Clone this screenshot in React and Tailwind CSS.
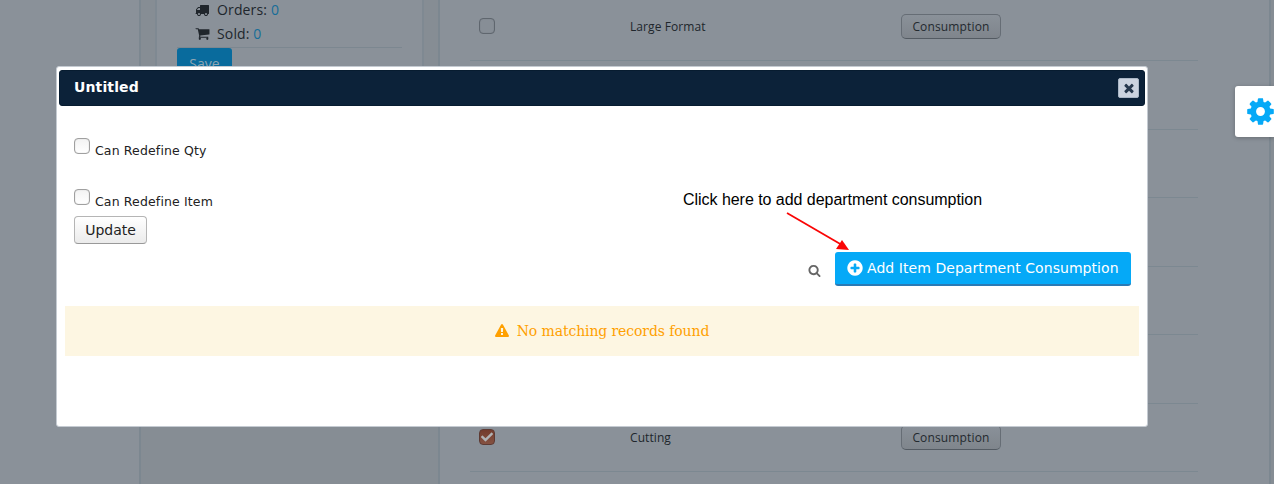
import React from "react";
import { FaCheck } from "react-icons/fa";

const ICONS = {
  cog: "M1152 896q0-106-75-181t-181-75-181 75-75 181 75 181 181 75 181-75 75-181zm512-109v222q0 12-8 23t-20 13l-185 28q-19 54-39 91 35 50 107 138 10 12 10 25t-9 23q-27 37-99 108t-94 71q-12 0-26-9l-138-108q-44 23-91 38-16 136-29 186-7 28-36 28h-222q-14 0-24.5-8.5t-11.5-21.5l-28-184q-49-16-90-37l-141 107q-10 9-25 9-14 0-25-11-126-114-165-168-7-10-7-23 0-12 8-23 15-21 51-66.5t54-70.5q-27-50-41-99l-183-27q-13-2-21-12.5t-8-23.5v-222q0-12 8-23t19-13l186-28q14-46 39-92-40-57-107-138-10-12-10-24 0-10 9-23 26-36 98.5-107.5t94.5-71.5q13 0 26 10l138 107q44-23 91-38 16-136 29-186 7-28 36-28h222q14 0 24.5 8.5t11.5 21.5l28 184q49 16 90 37l142-107q9-9 24-9 13 0 25 10 129 119 165 170 7 8 7 22 0 12-8 23-15 21-51 66.5t-54 70.5q26 50 41 98l183 28q13 2 21 12.5t8 23.5z",
  times: "M1490 1322q0 40-28 68l-136 136q-28 28-68 28t-68-28l-294-294-294 294q-28 28-68 28t-68-28l-136-136q-28-28-28-68t28-68l294-294-294-294q-28-28-28-68t28-68l136-136q28-28 68-28t68 28l294 294 294-294q28-28 68-28t68 28l136 136q28 28 28 68t-28 68l-294 294 294 294q28 28 28 68z",
  truck: "M640 1408q0-52-38-90t-90-38-90 38-38 90 38 90 90 38 90-38 38-90zm-384-512h384v-256h-158q-13 0-22 9l-195 195q-9 9-9 22v30zm1280 512q0-52-38-90t-90-38-90 38-38 90 38 90 90 38 90-38 38-90zm256-1088v1024q0 15-4 26.5t-13.5 18.5-16.5 11.5-23.5 6-22.5 2-25.5 0-22.5-.5q0 106-75 181t-181 75-181-75-75-181h-384q0 106-75 181t-181 75-181-75-75-181h-64q-3 0-22.5.5t-25.5 0-22.5-2-23.5-6-16.5-11.5-13.5-18.5-4-26.5q0-26 19-45t45-19v-320q0-8-.5-35t0-38 2.5-34.5 6.5-37 14-30.5 22.5-30l198-198q19-19 50.5-32t58.5-13h160v-192q0-26 19-45t45-19h1024q26 0 45 19t19 45z",
  cart: "M704 1536q0 52-38 90t-90 38-90-38-38-90 38-90 90-38 90 38 38 90zm896 0q0 52-38 90t-90 38-90-38-38-90 38-90 90-38 90 38 38 90zm128-1088v512q0 24-16.5 42.5t-40.5 21.5l-1044 122q13 60 13 70 0 16-24 64h920q26 0 45 19t19 45-19 45-45 19h-1024q-26 0-45-19t-19-45q0-11 8-31.5t16-36 21.5-40 15.5-29.5l-177-823h-204q-26 0-45-19t-19-45 19-45 45-19h256q16 0 28.5 6.5t19.5 15.5 13 24.5 8 26 5.5 29.5 4.5 26h1201q26 0 45 19t19 45z",
  search: "M1216 832q0-185-131.5-316.5t-316.5-131.5-316.5 131.5-131.5 316.5 131.5 316.5 316.5 131.5 316.5-131.5 131.5-316.5zm512 832q0 52-38 90t-90 38q-54 0-90-38l-343-342q-179 124-399 124-143 0-273.5-55.5t-225-150-150-225-55.5-273.5 55.5-273.5 150-225 225-150 273.5-55.5 273.5 55.5 225 150 150 225 55.5 273.5q0 220-124 399l343 343q37 37 37 90z",
  plus: "M1344 960v-128q0-26-19-45t-45-19h-256v-256q0-26-19-45t-45-19h-128q-26 0-45 19t-19 45v256h-256q-26 0-45 19t-19 45v128q0 26 19 45t45 19h256v256q0 26 19 45t45 19h128q26 0 45-19t19-45v-256h256q26 0 45-19t19-45zm320-64q0 209-103 385.5t-279.5 279.5-385.5 103-385.5-103-279.5-279.5-103-385.5 103-385.5 279.5-279.5 385.5-103 385.5 103 279.5 279.5 103 385.5z",
  warning: "M1024 1375v-190q0-14-9.500-23.500t-22.500-9.500h-192q-13 0-22.500 9.500t-9.500 23.500v190q0 14 9.500 23.500t22.500 9.500h192q13 0 22.500-9.500t9.500-23.500zm-2-374l18-459q0-12-10-19-13-11-24-11h-220q-11 0-24 11-10 7-10 21l17 457q0 10 10 16.500t24 6.500h185q14 0 23.500-6.500t10.500-16.500zm-14-934l768 1408q35 63-2 126-17 29-46.500 46t-63.500 17h-1536q-34 0-63.500-17t-46.500-46q-37-63-2-126l768-1408q17-31 47-49t65-18 65 18 47 49z",
};

function Icon({ name, size, className = "" }) {
  return (
    <svg viewBox="0 0 1792 1792" width={size} height={size} fill="currentColor" className={`shrink-0 ${className}`}>
      <path d={ICONS[name]} />
    </svg>
  );
}

function Box({ checked, dim }) {
  if (checked)
    return (
      <span className="flex size-4 items-center justify-center rounded-[4px] border border-[#5d3a33] bg-linear-to-b from-[#733c2d] to-[#855242] text-[#b0b3b5]">
        <FaCheck size={12} />
      </span>
    );
  return dim ? (
    <span className="block size-4 rounded-[4px] border border-[#5f666e] bg-[#878e96] shadow-[inset_0_0_1px_#656c74]" />
  ) : (
    <span className="block size-4 rounded-[4px] border border-[#a0a0a0] bg-linear-to-b from-[#f3f3f3] to-white shadow-[inset_0_0_1px_#aaa]" />
  );
}

function Row({ label, checked, height }) {
  return (
    <div className={`flex shrink-0 items-start border-b border-[#7c8891] ${height}`}>
      <div className="w-40 pl-[9px]">{label && <Box checked={checked} dim />}</div>
      <div className="w-[271px] pt-px text-[12px] leading-4 tracking-[0.08px] text-[#20262c]">{label}</div>
      {label && (
        <button className="-mt-1 h-[25px] w-[100px] rounded-[5px] border border-[#666d75] border-b-[#535a62] bg-linear-to-b from-[#8a9199] to-[#7f858c] text-[12px] leading-[22px] tracking-[0.15px] text-[#23292f]">
          Consumption
        </button>
      )}
    </div>
  );
}

export default function App() {
  return (
    <div className="relative h-[484px] w-[1274px] overflow-hidden bg-[#868d94] font-['Open_Sans',sans-serif]">
      <div className="flex h-full">
        <div className="w-[141px] border-r-2 border-[#7c8790] bg-[#8a9199]" />
        <div className="ml-[14px] h-[420px] w-[269px] border-x-2 border-[#7f8992] bg-[#8a9199] pl-5">
          <div className="flex h-12 w-[225px] flex-col text-[14px] tracking-[0.14px] text-[#20262c]">
            <div className="flex h-[19px] items-center pl-[18px]">
              <Icon name="truck" size={14} className="mt-px" />
              <span className="ml-2">Orders: <span className="text-[#166d98]">0</span></span>
            </div>
            <div className="flex h-[29px] items-center border-b border-[#7c8790] pl-[18px]">
              <Icon name="cart" size={15} />
              <span className="ml-[7px]">Sold: <span className="text-[#166d98]">0</span></span>
            </div>
          </div>
          <button className="block h-[34px] w-[55px] rounded-[3px] bg-[#096b9d] pb-[3px] text-[14px] text-[#8fa5b2]">Save</button>
        </div>
        <div className="ml-[14px] flex w-[833px] flex-col border-x-2 border-[#7c8790] bg-[#8a9199] pl-[30px] pr-[71px] pt-[18px]">
          <Row label="Large Format" height="h-[43px]" />
          <Row height="h-[69px]" />
          <Row height="h-[68px]" />
          <Row height="h-[69px]" />
          <Row height="h-[68px]" />
          <Row height="h-[69px]" />
          <div className="h-[25px] shrink-0" />
          <Row label="Cutting" checked height="h-[43px]" />
        </div>
      </div>

      <section className="absolute left-[56px] top-[66px] h-[361px] w-[1092px] rounded-[3px] border border-[#c5cbd2] bg-white p-[2px] pt-[3px] font-['DejaVu_Sans',sans-serif] text-[#222]">
        <header className="flex h-9 items-center justify-between rounded-[3px] border border-[#071c30] bg-[#0c2239] pl-[14px] pr-[5px]">
          <h1 className="pb-[2px] text-[14px] font-bold tracking-[0.13px] text-white">Untitled</h1>
          <button className="flex h-5 w-[21px] items-center justify-center rounded-[2px] border border-[#aab7c6] bg-[#cbd3df] pl-px text-[#26384d]">
            <Icon name="times" size={14} />
          </button>
        </header>
        <div className="px-[15px] pt-8">
          <label className="flex h-[51px] items-start gap-[5px] text-[12.5px] leading-4 tracking-[0.14px]"><Box /><span className="pt-[5px]">Can Redefine Qty</span></label>
          <label className="flex h-[27px] items-start gap-[5px] text-[12.5px] leading-4 tracking-[0.14px]"><Box /><span className="pt-[5px]">Can Redefine Item</span></label>
          <button className="block h-7 w-[73px] rounded-[4px] border border-[#b5b5b5] border-b-[#999] bg-linear-to-b from-white to-[#ebebeb] text-[14px] leading-[25px]">Update</button>
        </div>
        <div className="flex items-center justify-end pr-[14px] pt-2">
          <Icon name="search" size={13} className="mr-[14px] mt-[3px] text-[#666]" />
          <button className="flex h-[34px] w-[296px] items-center rounded-[3px] border-b-2 border-[#2a7ab5] bg-[#05a9f7] pl-[11px] text-[14px] tracking-[0.06px] text-white">
            <Icon name="plus" size={18} className="mr-[3px]" />
            <span className="whitespace-nowrap">Add Item Department Consumption</span>
          </button>
        </div>
        <div className="mx-[6px] mt-5 flex h-[50px] items-center justify-center bg-[#fdf6e2] font-['DejaVu_Serif',serif] text-[14px] tracking-[-0.11px] text-[#ffa000]">
          <Icon name="warning" size={14} className="mr-2" />
          <span>No matching records found</span>
        </div>
      </section>

      <div className="absolute left-[683px] top-[190px] whitespace-nowrap font-['Liberation_Sans',sans-serif] text-[16px] leading-5 tracking-[-0.038px] text-black">Click here to add department consumption</div>
      <svg className="absolute left-[780px] top-[208px]" width="76" height="46">
        <path d="M7 5L62 37" stroke="#fa0505" strokeWidth="1.8" />
        <path d="M69 42L56 41L62 32Z" fill="#fa0505" />
      </svg>

      <button className="absolute right-0 top-[86px] flex h-[51px] w-[39px] items-center rounded-l-[3px] bg-white pl-[10px] text-[#05a9f7] shadow-[0_1px_4px_rgba(0,0,0,0.25)]">
        <Icon name="cog" size={31} />
      </button>
    </div>
  );
}
